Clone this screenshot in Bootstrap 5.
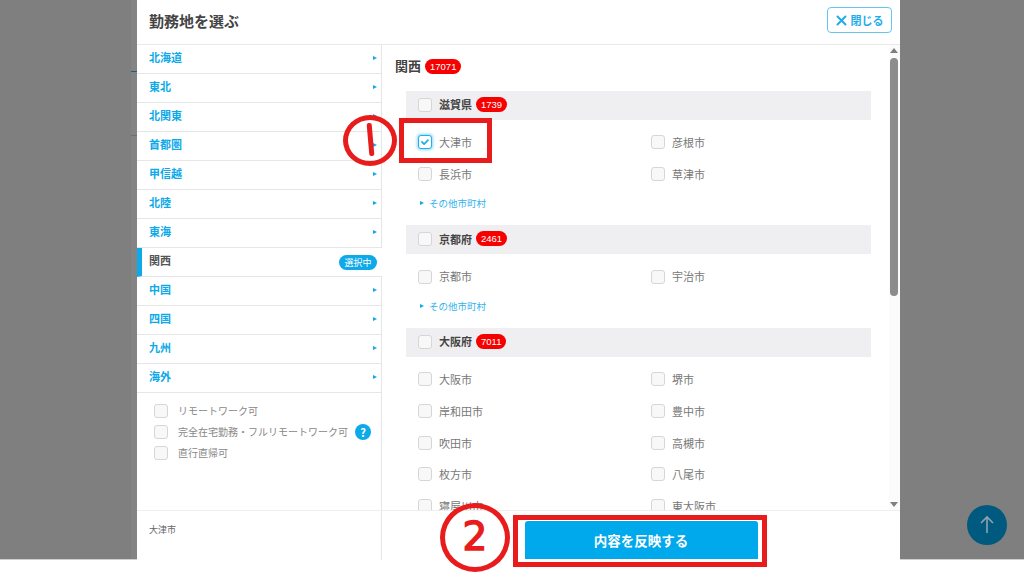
<!DOCTYPE html>
<html lang="ja">
<head>
  <meta charset="UTF-8" />
  <title>勤務地を選ぶ</title>
  <link href="https://cdn.jsdelivr.net/npm/bootstrap@5.3.0/dist/css/bootstrap.min.css" rel="stylesheet">
  <style>
    html, body { height: 573px; overflow: hidden; }
    body {
      background: #fff;
      font-family: "Noto Sans CJK JP", "Liberation Sans", sans-serif;
      color: #777;
      position: relative;
    }
    .stage {
      height: 560px;
      background: #7f7f7f;
      border-bottom: 1px solid #cfcfcf;
      padding-left: 131px;
    }
    .behind { width: 6px; background: #848484; }
    .behind-blue { height: 1px; margin-top: 71px; background: #0b6684; }
    .behind-line { height: 1px; margin-top: 63px; background: #6f6f6f; }
    /* 1px taller than the stage so it covers the light line along the bottom */
    .sheet { width: 763px; height: 560px; flex: none; background: #fff; }

    .sheet-head { height: 45px; border-bottom: 1px solid #e9e9e9; padding: 0 8px 4px 12px; }
    .sheet-title { font-size: 15px; font-weight: 700; color: #444; line-height: 1; margin: 0; }
    .close-btn {
      width: 65px; height: 26px; padding: 0;
      border: 1px solid #62c6ef; border-radius: 4px;
      color: #1fadea; font-size: 11px; font-weight: 700; background: #fff;
    }
    .close-btn:hover { background: #fff; color: #1fadea; border-color: #62c6ef; }

    .sheet-body { height: 465px; }
    .area-col { width: 245px; flex: none; }
    .area-list { margin: 0; padding: 0; list-style: none; }
    .area-item {
      height: 29px; padding: 0 4px 3px 12px;
      border-right: 1px solid #e6e6e6;
      border-bottom: 1px solid #e6e6e6;
      color: #0ea9e9; font-size: 11px; font-weight: 700;
    }
    .area-arrow {
      width: 0; height: 0;
      border-left: 4px solid #0ea9e9;
      border-top: 2.5px solid transparent;
      border-bottom: 2.5px solid transparent;
    }
    .area-current {
      color: #555; border-right: 0; padding-left: 7px; padding-right: 5px;
      border-left: 5px solid #0ea9e9;
    }
    .now-tag {
      width: 38px; height: 15px; margin-top: 3px; border-radius: 8px; background: #0ea9e9; color: #fff;
      font-size: 9px; font-weight: 400; line-height: 15px; text-align: center;
    }
    .area-options { border-right: 1px solid #e6e6e6; flex: 1; padding: 7px 0 0 17px; }
    .opt-line { height: 21px; font-size: 10px; color: #888; }
    .opt-line .tick { margin-right: 10px; }
    .help-dot {
      width: 16px; height: 16px; border-radius: 50%; background: #0ea9e9; color: #fff;
      font-size: 11px; font-weight: 700; line-height: 16px; text-align: center; margin-left: 7px;
    }
    .form-check-input.tick {
      width: 14px; height: 14px; flex: none; margin-top: 0; margin-bottom: 0; margin-left: 0;
      background-color: #f8f8f8; border: 1px solid #d6d6d6; border-radius: 3px;
    }
    .form-check-input.tick:checked {
      background-color: #fff; border-color: #22aeea;
      box-shadow: 0 0 3px 1px #8fd8f6;
      background-image: url("data:image/svg+xml,%3csvg xmlns='http://www.w3.org/2000/svg' viewBox='0 0 20 20'%3e%3cpath fill='none' stroke='%2322aeea' stroke-linecap='round' stroke-linejoin='round' stroke-width='3' d='m5 10 3.5 3.5L15 7'/%3e%3c/svg%3e");
    }

    .city-col { flex: 1; overflow: hidden; padding: 10px 0 0 13px; }
    .region-title { height: 22px; font-size: 13px; font-weight: 700; color: #444; margin-bottom: 14px; }
    .red-count {
      height: 15px; padding: 0 5px; margin-left: 4px; border-radius: 8px;
      background: #f60000; color: #fff;
      font-family: "Liberation Sans", sans-serif; font-size: 9.5px; font-weight: 400; line-height: 15px;
    }
    .pref-block { margin-left: 11px; width: 465px; margin-bottom: 14px; }
    .pref-head {
      height: 29px; background: #efeff1; padding: 0 0 2px 12px;
      font-size: 11px; font-weight: 700; color: #444;
    }
    .pref-head .tick { margin-right: 7px; }
    .city-grid {
      display: grid; grid-template-columns: 233px 233px; grid-auto-rows: 31.7px;
      margin-top: 6.5px; padding-left: 12px;
    }
    .city-cell { font-size: 11px; color: #777; }
    .city-cell .tick { margin-right: 7px; }
    .more-link {
      height: 16px; margin-top: 5.5px; padding-left: 14px;
      color: #33b3ec; font-size: 9.5px; text-decoration: none;
    }
    .more-link::before {
      content: ""; width: 0; height: 0; margin-right: 5px;
      border-left: 4px solid #0ea9e9;
      border-top: 2.5px solid transparent;
      border-bottom: 2.5px solid transparent;
    }

    .sheet-foot { height: 50px; border-top: 1px solid #eee; }
    .foot-picked {
      width: 245px; padding: 12px 12px; border-right: 1px solid #e6e6e6;
      font-size: 9px; color: #666;
    }
    .apply-btn {
      width: 233px; height: 38px; margin-top: 10px; padding: 0;
      border: 0; border-radius: 3px 3px 0 0; background: #00a9ec; color: #fff;
      font-size: 13.5px; font-weight: 700;
    }
    .apply-btn:hover { background: #00a9ec; color: #fff; }

    /* scrollbar, sits on the city column */
    .fake-scroll { position: absolute; left: 889px; top: 45px; width: 11px; height: 465px; background: #fbfbfb; }
    .scroll-up, .scroll-down {
      position: absolute; left: 1px; width: 0; height: 0;
      border-left: 4.5px solid transparent; border-right: 4.5px solid transparent;
    }
    .scroll-up { top: 3px; border-bottom: 5px solid #7f7f7f; }
    .scroll-down { bottom: 3px; border-top: 5px solid #7f7f7f; }
    .scroll-thumb { position: absolute; left: 1px; top: 13px; width: 8px; height: 238px; border-radius: 4px; background: #8c8c8c; }

    .to-top {
      position: absolute; left: 967px; top: 505px; width: 40px; height: 40px;
      border-radius: 50%; background: #005a7f;
    }

    /* red marks added on the screenshot */
    .red-box { position: absolute; border: 5px solid #e81c1c; }
    .box-one { left: 399px; top: 118px; width: 93px; height: 45px; }
    .box-two { left: 513px; top: 515px; width: 254px; height: 52px; }
    .red-ring { position: absolute; border: 5px solid #e81c1c; border-radius: 50%; }
    .ring-one { left: 343px; top: 115px; width: 54px; height: 51px; }
    .ring-two {
      left: 440px; top: 503px; width: 70px; height: 69px;
      color: #e81c1c; font-family: "DejaVu Sans", sans-serif; font-size: 39px; font-weight: 400; line-height: 57px; text-align: center;
      -webkit-text-stroke: 1.5px #e81c1c;
    }
    .ring-stroke {
      position: absolute; left: 368px; top: 123px; width: 5px; height: 33px;
      border-radius: 2px; background: #e81c1c; transform: rotate(-5deg);
    }
  </style>
</head>
<body>

  <div class="stage d-flex">
    <div class="behind">
      <div class="behind-blue"></div>
      <div class="behind-line"></div>
    </div>

    <div class="sheet d-flex flex-column">
      <div class="sheet-head d-flex align-items-center justify-content-between">
        <h2 class="sheet-title">勤務地を選ぶ</h2>
        <button type="button" class="btn close-btn d-flex align-items-center justify-content-center gap-1">
          <svg width="11" height="11" viewBox="0 0 11 11"><path d="M1.5 1.5l8 8M9.5 1.5l-8 8" stroke="#1fadea" stroke-width="2" stroke-linecap="round"/></svg>
          閉じる
        </button>
      </div>

      <div class="sheet-body d-flex">
        <div class="area-col d-flex flex-column">
          <ul class="area-list" id="areaList"></ul>
          <div class="area-options">
            <div class="opt-line d-flex align-items-center"><input class="form-check-input tick" type="checkbox"><span>リモートワーク可</span></div>
            <div class="opt-line d-flex align-items-center"><input class="form-check-input tick" type="checkbox"><span>完全在宅勤務・フルリモートワーク可</span><span class="help-dot">?</span></div>
            <div class="opt-line d-flex align-items-center"><input class="form-check-input tick" type="checkbox"><span>直行直帰可</span></div>
          </div>
        </div>

        <div class="city-col" id="cityCol">
          <div class="region-title d-flex align-items-center">関西<span class="red-count">17071</span></div>
        </div>
      </div>

      <div class="sheet-foot d-flex">
        <div class="foot-picked">大津市</div>
        <div class="flex-grow-1 d-flex justify-content-center">
          <button type="button" class="btn apply-btn">内容を反映する</button>
        </div>
      </div>
    </div>
  </div>

  <div class="fake-scroll">
    <div class="scroll-up"></div>
    <div class="scroll-thumb"></div>
    <div class="scroll-down"></div>
  </div>

  <div class="to-top d-flex align-items-center justify-content-center">
    <svg width="16" height="20" viewBox="0 0 16 20"><path d="M8 18V2M2 8l6-6 6 6" fill="none" stroke="#8fa3ad" stroke-width="1.6"/></svg>
  </div>

  <div class="red-box box-one"></div>
  <div class="red-box box-two"></div>
  <div class="red-ring ring-one"></div>
  <div class="ring-stroke"></div>
  <div class="red-ring ring-two">2</div>

  <script src="https://cdn.jsdelivr.net/npm/bootstrap@5.3.0/dist/js/bootstrap.bundle.min.js"></script>
  <script>
    const areas = ["北海道", "東北", "北関東", "首都圏", "甲信越", "北陸", "東海", "関西", "中国", "四国", "九州", "海外"];
    const prefs = [
      { name: "滋賀県", count: 1739, cities: ["大津市", "彦根市", "長浜市", "草津市"], more: true },
      { name: "京都府", count: 2461, cities: ["京都市", "宇治市"], more: true },
      { name: "大阪府", count: 7011, cities: ["大阪市", "堺市", "岸和田市", "豊中市", "吹田市", "高槻市", "枚方市", "八尾市", "寝屋川市", "東大阪市"], more: false }
    ];

    document.getElementById("areaList").innerHTML = areas.map(a => a === "関西"
      ? `<li class="area-item area-current d-flex align-items-center justify-content-between">${a}<span class="now-tag">選択中</span></li>`
      : `<li class="area-item d-flex align-items-center justify-content-between">${a}<span class="area-arrow"></span></li>`
    ).join("");

    document.getElementById("cityCol").innerHTML += prefs.map(p => `
      <div class="pref-block">
        <div class="pref-head d-flex align-items-center">
          <input class="form-check-input tick" type="checkbox">${p.name}<span class="red-count">${p.count}</span>
        </div>
        <div class="city-grid">
          ${p.cities.map(c => `<div class="city-cell d-flex align-items-center"><input class="form-check-input tick" type="checkbox"${c === "大津市" ? " checked" : ""}>${c}</div>`).join("")}
        </div>
        ${p.more ? `<a class="more-link d-flex align-items-center" href="#">その他市町村</a>` : ""}
      </div>`).join("");
  </script>

</body>
</html>
